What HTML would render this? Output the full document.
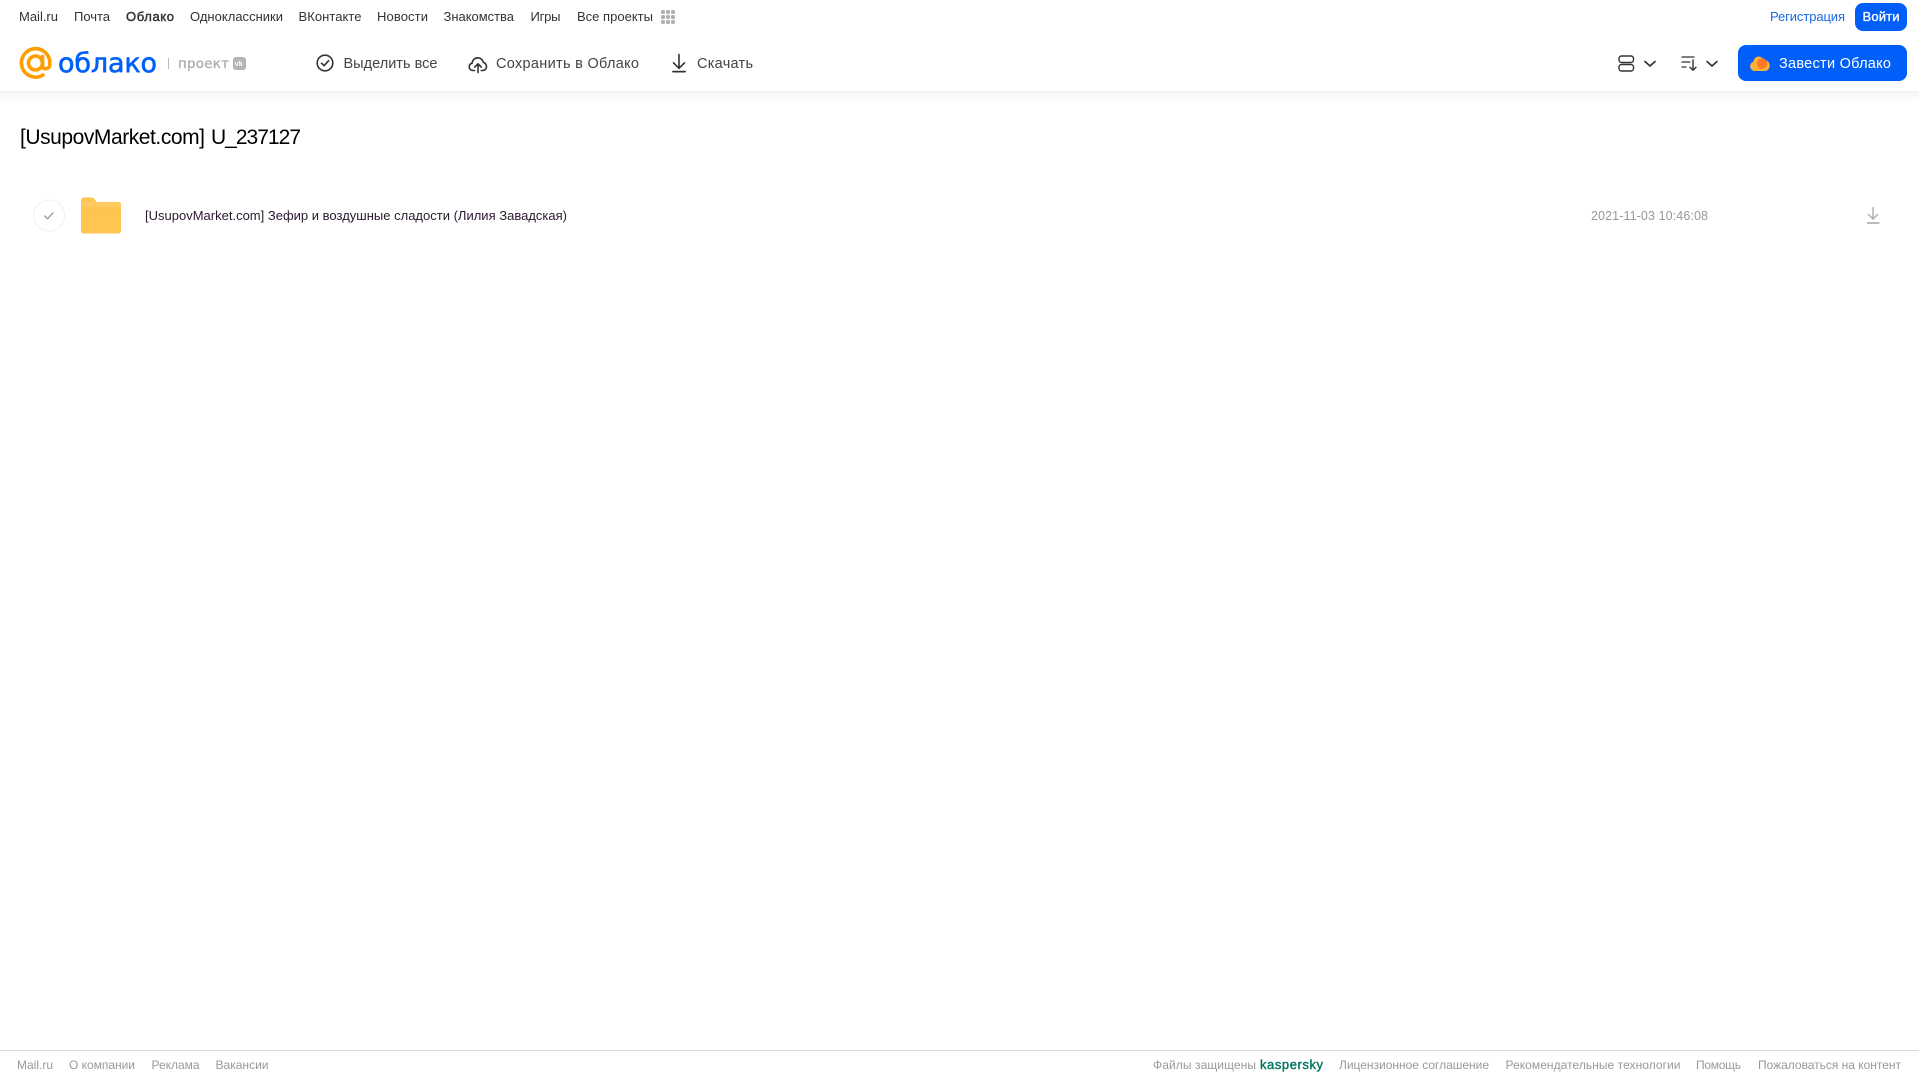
<!DOCTYPE html>
<html lang="ru">
<head>
<meta charset="utf-8">
<title>Облако</title>
<style>
html,body{margin:0;padding:0;background:#fff;width:1919px;height:1079px;overflow:hidden}
svg{display:block;position:absolute;left:0;top:0}
text{font-family:"Liberation Sans",sans-serif}
.n{font-size:13px;fill:#333}
.t{font-size:14.5px;fill:#444}
.f{font-size:12px;fill:#999}
.d{font-family:"DejaVu Sans",sans-serif}
</style>
</head>
<body>
<svg width="1919" height="1079" viewBox="0 0 1919 1079" xmlns="http://www.w3.org/2000/svg">
<defs>
<linearGradient id="sh" x1="0" y1="0" x2="0" y2="1"><stop offset="0" stop-color="#f2f2f2"/><stop offset="1" stop-color="#fff"/></linearGradient>
<linearGradient id="fo" x1="0" y1="0" x2="0" y2="1"><stop offset="0" stop-color="#ffc34f"/><stop offset="1" stop-color="#ffc653"/></linearGradient>
</defs>
<rect x="0" y="91" width="1919" height="10" fill="url(#sh)"/>

<!-- top nav -->
<text class="n" x="19" y="21" textLength="39" lengthAdjust="spacing">Mail.ru</text>
<text class="n" x="74" y="21" textLength="36" lengthAdjust="spacing">Почта</text>
<text class="n" x="126" y="21" textLength="48" lengthAdjust="spacing" stroke="#333" stroke-width=".45">Облако</text>
<text class="n" x="190" y="21" textLength="93" lengthAdjust="spacing">Одноклассники</text>
<text class="n" x="298.500" y="21" textLength="63" lengthAdjust="spacing">ВКонтакте</text>
<text class="n" x="377" y="21" textLength="51" lengthAdjust="spacing">Новости</text>
<text class="n" x="443.500" y="21" textLength="70.500" lengthAdjust="spacing">Знакомства</text>
<text class="n" x="530.500" y="21" textLength="30" lengthAdjust="spacing">Игры</text>
<text class="n" x="577" y="21" textLength="76" lengthAdjust="spacing">Все проекты</text>
<g fill="#b0b0b0">
<rect x="661" y="10" width="4" height="4" rx="1.500"/><rect x="666" y="10" width="4" height="4" rx="1.500"/><rect x="671" y="10" width="4" height="4" rx="1.500"/>
<rect x="661" y="15" width="4" height="4" rx="1.500"/><rect x="666" y="15" width="4" height="4" rx="1.500"/><rect x="671" y="15" width="4" height="4" rx="1.500"/>
<rect x="661" y="20" width="4" height="4" rx="1.500"/><rect x="666" y="20" width="4" height="4" rx="1.500"/><rect x="671" y="20" width="4" height="4" rx="1.500"/>
</g>
<text x="1770" y="21" font-size="13" fill="#1a6be0" textLength="75" lengthAdjust="spacing">Регистрация</text>
<rect x="1855" y="3" width="52" height="28" rx="8" fill="#005ff9"/>
<text x="1862.500" y="21" font-size="13" fill="#fff" stroke="#fff" stroke-width=".35" textLength="37" lengthAdjust="spacing">Войти</text>

<!-- logo -->
<g fill="none" stroke="#ff9e00" stroke-width="3.600" stroke-linecap="round">
<circle cx="35.500" cy="63" r="7"/>
<path d="M42.500 56.500V65.500c0 4.500 6.700 4.500 7.200-.7A14.200 14.200 0 1 0 43 75"/>
</g>
<text class="d" x="58" y="72" font-size="27" fill="#005ff9" stroke="#005ff9" stroke-width=".6" textLength="99" lengthAdjust="spacing">облако</text>
<rect x="168" y="58" width="1" height="11" fill="#bbb"/>
<text class="d" x="178" y="68" font-size="13.500" fill="#aaa" stroke="#aaa" stroke-width=".25" textLength="51" lengthAdjust="spacing">проект</text>
<rect x="233" y="57" width="13" height="13" rx="3" fill="#b4b4b4"/>
<text x="234.800" y="66" font-size="7" font-weight="700" fill="#fff">vk</text>

<!-- toolbar -->
<g fill="none" stroke="#333" stroke-width="1.600" stroke-linecap="round" stroke-linejoin="round">
<circle cx="325" cy="63" r="7.800"/>
<path d="M321.500 63.200l2.600 2.500 4.500-5"/>
<path d="M474.500 70.500h-1.500c-2.300 0-3.800-1.700-3.800-3.600 0-1.900 1.200-3.300 2.900-3.700.3-3.200 2.700-5.400 5.700-5.400 2.800 0 5 1.900 5.500 4.500 1.800.4 3.200 2.300 3.200 4.400 0 2.200-1.600 3.800-3.800 3.800h-1.500"/>
<path d="M478 72.500v-8.500M474.800 67l3.200-3.200 3.200 3.200"/>
<path d="M679 54.500V68M673.500 62.800l5.500 5.500 5.500-5.500"/>
<path d="M673 71.600h12" stroke-width="1.800"/>
</g>
<text class="t" x="343.500" y="68" textLength="94" lengthAdjust="spacing">Выделить все</text>
<text class="t" x="496" y="68" textLength="143" lengthAdjust="spacing">Сохранить в Облако</text>
<text class="t" x="697" y="68" textLength="56" lengthAdjust="spacing">Скачать</text>

<!-- view / sort -->
<g fill="none" stroke="#333" stroke-width="1.400" stroke-linecap="round" stroke-linejoin="round">
<rect x="1619" y="56" width="14.500" height="6.500" rx="2.500"/>
<rect x="1619" y="64.500" width="14.500" height="6.500" rx="2.500"/>
<path d="M1645 61.500l5 4.500 5-4.500" stroke-width="1.700"/>
<path d="M1682 57h12M1682 62h8M1682 67h4" stroke-width="1.300"/>
<path d="M1693 60v10M1690 67.200l3 3 3-3"/>
<path d="M1707 61.500l5 4.500 5-4.500" stroke-width="1.700"/>
</g>

<!-- CTA -->
<rect x="1738" y="45" width="169" height="36" rx="8" fill="#005ff9"/>
<path d="M1755 71c-3 0-4.800-2.200-4.800-4.700 0-2.300 1.500-4 3.200-4.500.3-3.200 2.400-5.300 5.100-5.300 2.500 0 4.400 1.500 5.200 3.700 3.200-.3 6 2.200 6 5.400 0 3-2.200 5.400-5 5.400z" fill="#ffb03a"/>
<circle cx="1762" cy="63.500" r="5.200" fill="#ff7a22"/>
<text x="1779" y="68" font-size="14.500" fill="#fff" textLength="112" lengthAdjust="spacing">Завести Облако</text>

<!-- title -->
<text x="20" y="144" font-size="21" fill="#000" textLength="185" lengthAdjust="spacing">[UsupovMarket.com]</text>
<text x="211" y="144" font-size="21" fill="#000" textLength="90" lengthAdjust="spacing">U_237127</text>

<!-- row -->
<circle cx="49" cy="215.500" r="15.500" fill="#fff" stroke="#f0f0f0" stroke-width="1"/>
<path d="M44.500 215.800l3 3 5.500-6" fill="none" stroke="#999" stroke-width="1.300" stroke-linecap="round" stroke-linejoin="round"/>
<path d="M81 201c0-2 1-3.500 3-3.500h7c1.800 0 2.800.8 3.800 2l1.700 2.500H118c2 0 3 1 3 3v25.500c0 2-1 3-3 3H84c-2 0-3-1-3-3z" fill="url(#fo)"/>
<rect x="81" y="202" width="40" height="5" fill="#ffcf70" opacity=".55"/>
<text x="145" y="220" font-size="13" fill="#2a1a2e" textLength="422" lengthAdjust="spacing">[UsupovMarket.com] Зефир и воздушные сладости (Лилия Завадская)</text>
<text x="1591" y="220" font-size="12.500" fill="#999" textLength="117" lengthAdjust="spacing">2021-11-03 10:46:08</text>
<g fill="none" stroke="#aaa" stroke-width="1.400">
<path d="M1873 207v12M1868 214l5 5 5-5"/>
<path d="M1867 223h12.500" stroke-width="1.600"/>
</g>

<!-- footer -->
<rect x="0" y="1050" width="1919" height="1" fill="#d9d9d9"/>
<text class="f" x="17" y="1069" textLength="36" lengthAdjust="spacing">Mail.ru</text>
<text class="f" x="69" y="1069" textLength="66" lengthAdjust="spacing">О компании</text>
<text class="f" x="151.500" y="1069" textLength="48" lengthAdjust="spacing">Реклама</text>
<text class="f" x="215.500" y="1069" textLength="53" lengthAdjust="spacing">Вакансии</text>
<text class="f" x="1153" y="1069" textLength="103" lengthAdjust="spacing">Файлы защищены</text>
<text x="1260" y="1069" font-size="13" fill="#00765f" stroke="#00765f" stroke-width=".4" textLength="63" lengthAdjust="spacing">kaspersky</text>
<text class="f" x="1339" y="1069" textLength="150" lengthAdjust="spacing">Лицензионное соглашение</text>
<text class="f" x="1505.500" y="1069" textLength="175" lengthAdjust="spacing">Рекомендательные технологии</text>
<text class="f" x="1696" y="1069" textLength="45" lengthAdjust="spacing">Помощь</text>
<text class="f" x="1758" y="1069" textLength="143" lengthAdjust="spacing">Пожаловаться на контент</text>
</svg>
</body>
</html>
